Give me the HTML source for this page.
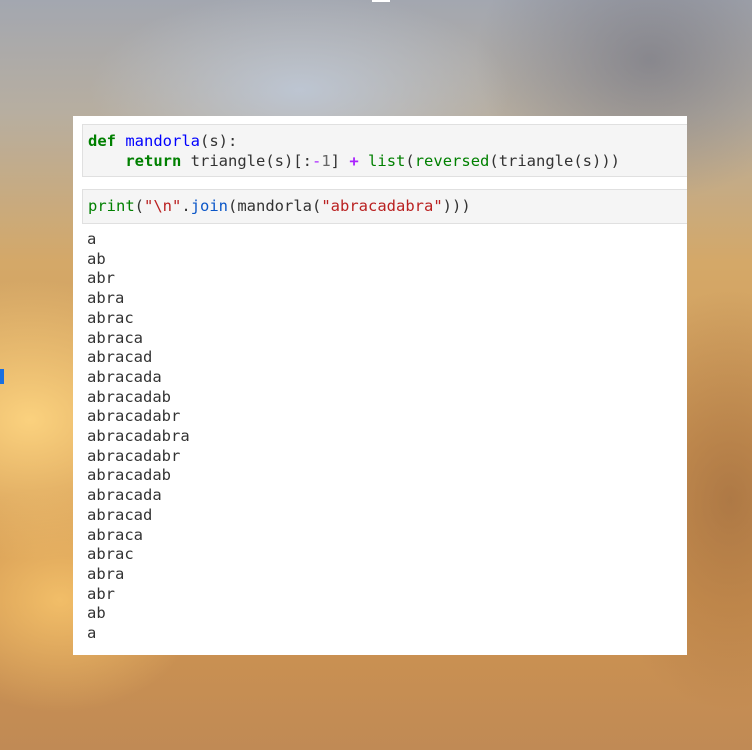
<!DOCTYPE html>
<html><head><meta charset="utf-8"><style>
html,body{margin:0;padding:0;width:752px;height:750px;overflow:hidden}
body{position:relative;background:
radial-gradient(ellipse 260px 200px at 30px 420px,rgba(255,215,130,.9),rgba(255,215,130,0) 70%),
radial-gradient(ellipse 200px 160px at 60px 600px,rgba(250,200,110,.8),rgba(250,200,110,0) 70%),
radial-gradient(ellipse 300px 140px at 300px 90px,rgba(190,200,215,.9),rgba(190,200,215,0) 70%),
radial-gradient(ellipse 250px 200px at 650px 60px,rgba(120,120,130,.7),rgba(120,120,130,0) 70%),
radial-gradient(ellipse 200px 300px at 730px 500px,rgba(150,100,60,.6),rgba(150,100,60,0) 70%),
linear-gradient(180deg,#a3a7b0 0%,#b7aea0 15%,#d4a868 35%,#d39a55 60%,#cf9450 80%,#c08a55 100%);}
.panel{position:absolute;left:73px;top:116px;width:614px;height:539px;background:#fff}
.cell{position:absolute;left:82px;width:605px;background:#f5f5f5;border:1px solid #e0e0e0;border-right:none;box-sizing:border-box}
pre{margin:0;font-family:"DejaVu Sans Mono","Liberation Mono",monospace;font-size:15.5px;line-height:19.7px;color:#333}
.k{color:#008000;font-weight:bold}.f{color:#0000ff}.b{color:#008000}.o{color:#aa22ff;font-weight:bold}.n{color:#666}.s{color:#ba2121}.m{color:#0a56c8}
</style></head><body>
<div style="position:absolute;left:372px;top:0;width:18px;height:2px;background:#fff"></div>
<div style="position:absolute;left:0;top:369px;width:4px;height:15px;background:#1a6fe0"></div>
<div class="panel"></div>
<div class="cell" style="top:124px;height:53px"><pre style="padding:7px 0 0 5px">
<span class="k">def</span> <span class="f">mandorla</span>(s):
    <span class="k">return</span> triangle(s)[:<span style="color:#aa22ff">-</span><span class="n">1</span>] <span class="o">+</span> <span class="b">list</span>(<span class="b">reversed</span>(triangle(s)))</pre></div>
<div class="cell" style="top:189px;height:35px"><pre style="padding:7px 0 0 5px"><span class="b">print</span>(<span class="s">"\n"</span>.<span class="m">join</span>(mandorla(<span class="s">"abracadabra"</span>)))</pre></div>
<pre style="position:absolute;left:87px;top:230px">a
ab
abr
abra
abrac
abraca
abracad
abracada
abracadab
abracadabr
abracadabra
abracadabr
abracadab
abracada
abracad
abraca
abrac
abra
abr
ab
a</pre>
</body></html>
